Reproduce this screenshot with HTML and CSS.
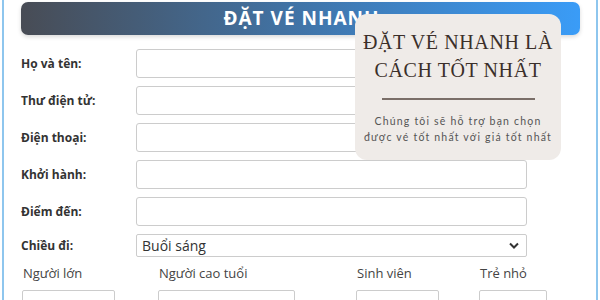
FILE: index.html
```html
<!DOCTYPE html>
<html lang="vi">

<head>
    <meta charset="UTF-8" />
    <meta name="viewport" content="width=device-width, initial-scale=1" />
    <title>Đặt vé nhanh</title>
    <link rel="stylesheet" href="styles.css">
</head>

<body>
    <div class="frame">
        <!-- Header -->
        <h1 class="banner">ĐẶT VÉ NHANH</h1>

        <!-- Booking form -->
        <form class="booking">
            <label class="field-label" for="name">Họ và tên:</label>
            <input class="field" id="name" type="text">

            <label class="field-label" for="email">Thư điện tử:</label>
            <input class="field" id="email" type="text">

            <label class="field-label" for="phone">Điện thoại:</label>
            <input class="field" id="phone" type="text">

            <label class="field-label" for="from">Khởi hành:</label>
            <input class="field" id="from" type="text">

            <label class="field-label" for="to">Điểm đến:</label>
            <input class="field" id="to" type="text">

            <label class="field-label" for="time">Chiều đi:</label>
            <div class="select-box">
                <span>Buổi sáng</span>
                <svg class="chevron" width="10" height="7" viewBox="0 0 10 7">
                    <path d="M1 1.5 L5 5.5 L9 1.5" fill="none" stroke="#333" stroke-width="2" />
                </svg>
            </div>
        </form>

        <!-- Passenger counts -->
        <div class="passengers">
            <div class="pax">
                <div class="pax-label">Người lớn</div>
                <div class="pax-select w-adult"></div>
            </div>
            <div class="pax">
                <div class="pax-label">Người cao tuổi</div>
                <div class="pax-select w-senior"></div>
            </div>
            <div class="pax">
                <div class="pax-label">Sinh viên</div>
                <div class="pax-select w-student"></div>
            </div>
            <div class="pax">
                <div class="pax-label">Trẻ nhỏ</div>
                <div class="pax-select w-child"></div>
            </div>
        </div>

        <!-- Promo card over the form -->
        <aside class="promo">
            <h2>ĐẶT VÉ NHANH LÀ<br>CÁCH TỐT NHẤT</h2>
            <hr>
            <p>Chúng tôi sẽ hỗ trợ bạn chọn<br>được vé tốt nhất với giá tốt nhất</p>
        </aside>
    </div>
</body>

</html>
```

FILE: styles.css
```css
/* Reset & Global Styles */
* {
    margin: 0;
    padding: 0;
    box-sizing: border-box;
}

body {
    background: #fff;
    font-family: 'Open Sans', 'Segoe UI', sans-serif;
    color: #333;
    overflow: hidden;
}

.frame {
    position: relative;
    margin: 0 2px;
    height: 300px;
    overflow: hidden;
    border-left: 2px solid #8ec6ee;
    border-right: 2px solid #8ec6ee;
    padding: 2px 16px 0 17px;
}

/* Header */
.banner {
    height: 33px;
    width: 559px;
    border-radius: 7px;
    background: linear-gradient(90deg, #484c55, #3f7cb8 60%, #3a9cf7);
    color: #fff;
    font-size: 19px;
    font-weight: 700;
    letter-spacing: 1px;
    line-height: 33px;
    text-align: center;
    padding-left: 2px;
    box-shadow: 0 2px 4px rgba(0, 0, 0, 0.15);
}

/* Form rows */
.booking {
    display: grid;
    grid-template-columns: 115px 391px;
    row-gap: 8px;
    align-items: center;
    margin-top: 14px;
}

.field-label {
    font-size: 12px;
    font-weight: 700;
    color: #333;
}

.field {
    height: 29px;
    border: 1px solid #ccc;
    border-radius: 3px;
    background: #fff;
}

.select-box {
    height: 23px;
    border: 1px solid #ccc;
    border-radius: 2px;
    display: flex;
    align-items: center;
    justify-content: space-between;
    padding: 0 7px 0 5px;
    font-size: 14px;
    color: #333;
}

/* Passenger counts */
.passengers {
    display: grid;
    grid-template-columns: 136px 198px 123px 80px;
    margin-top: 6px;
    padding-left: 1px;
}

.pax-label {
    font-size: 13px;
    color: #444;
    padding-left: 1px;
    line-height: 20px;
}

.pax-select {
    height: 24px;
    margin-top: 7px;
    border: 1px solid #ccc;
    border-radius: 2px;
}

.w-adult { width: 93px; }
.w-senior { width: 137px; }
.w-student { width: 83px; }
.w-child { width: 68px; }

/* Promo card */
.promo {
    position: absolute;
    top: 14px;
    left: 351px;
    width: 206px;
    height: 146px;
    background: #efebe8;
    border-radius: 12px;
    text-align: center;
    padding-top: 14px;
    white-space: nowrap;
}

.promo h2 {
    font-family: 'Liberation Serif', serif;
    font-weight: 400;
    font-size: 20px;
    line-height: 28px;
    letter-spacing: 0.6px;
    color: #3b2f2a;
}

.promo hr {
    border: none;
    border-top: 2px solid #7a6e68;
    width: 153px;
    margin: 14px auto 13px;
}

.promo p {
    font-family: 'Lato', sans-serif;
    font-size: 10.5px;
    line-height: 16px;
    letter-spacing: 1.2px;
    color: #555;
}
```
